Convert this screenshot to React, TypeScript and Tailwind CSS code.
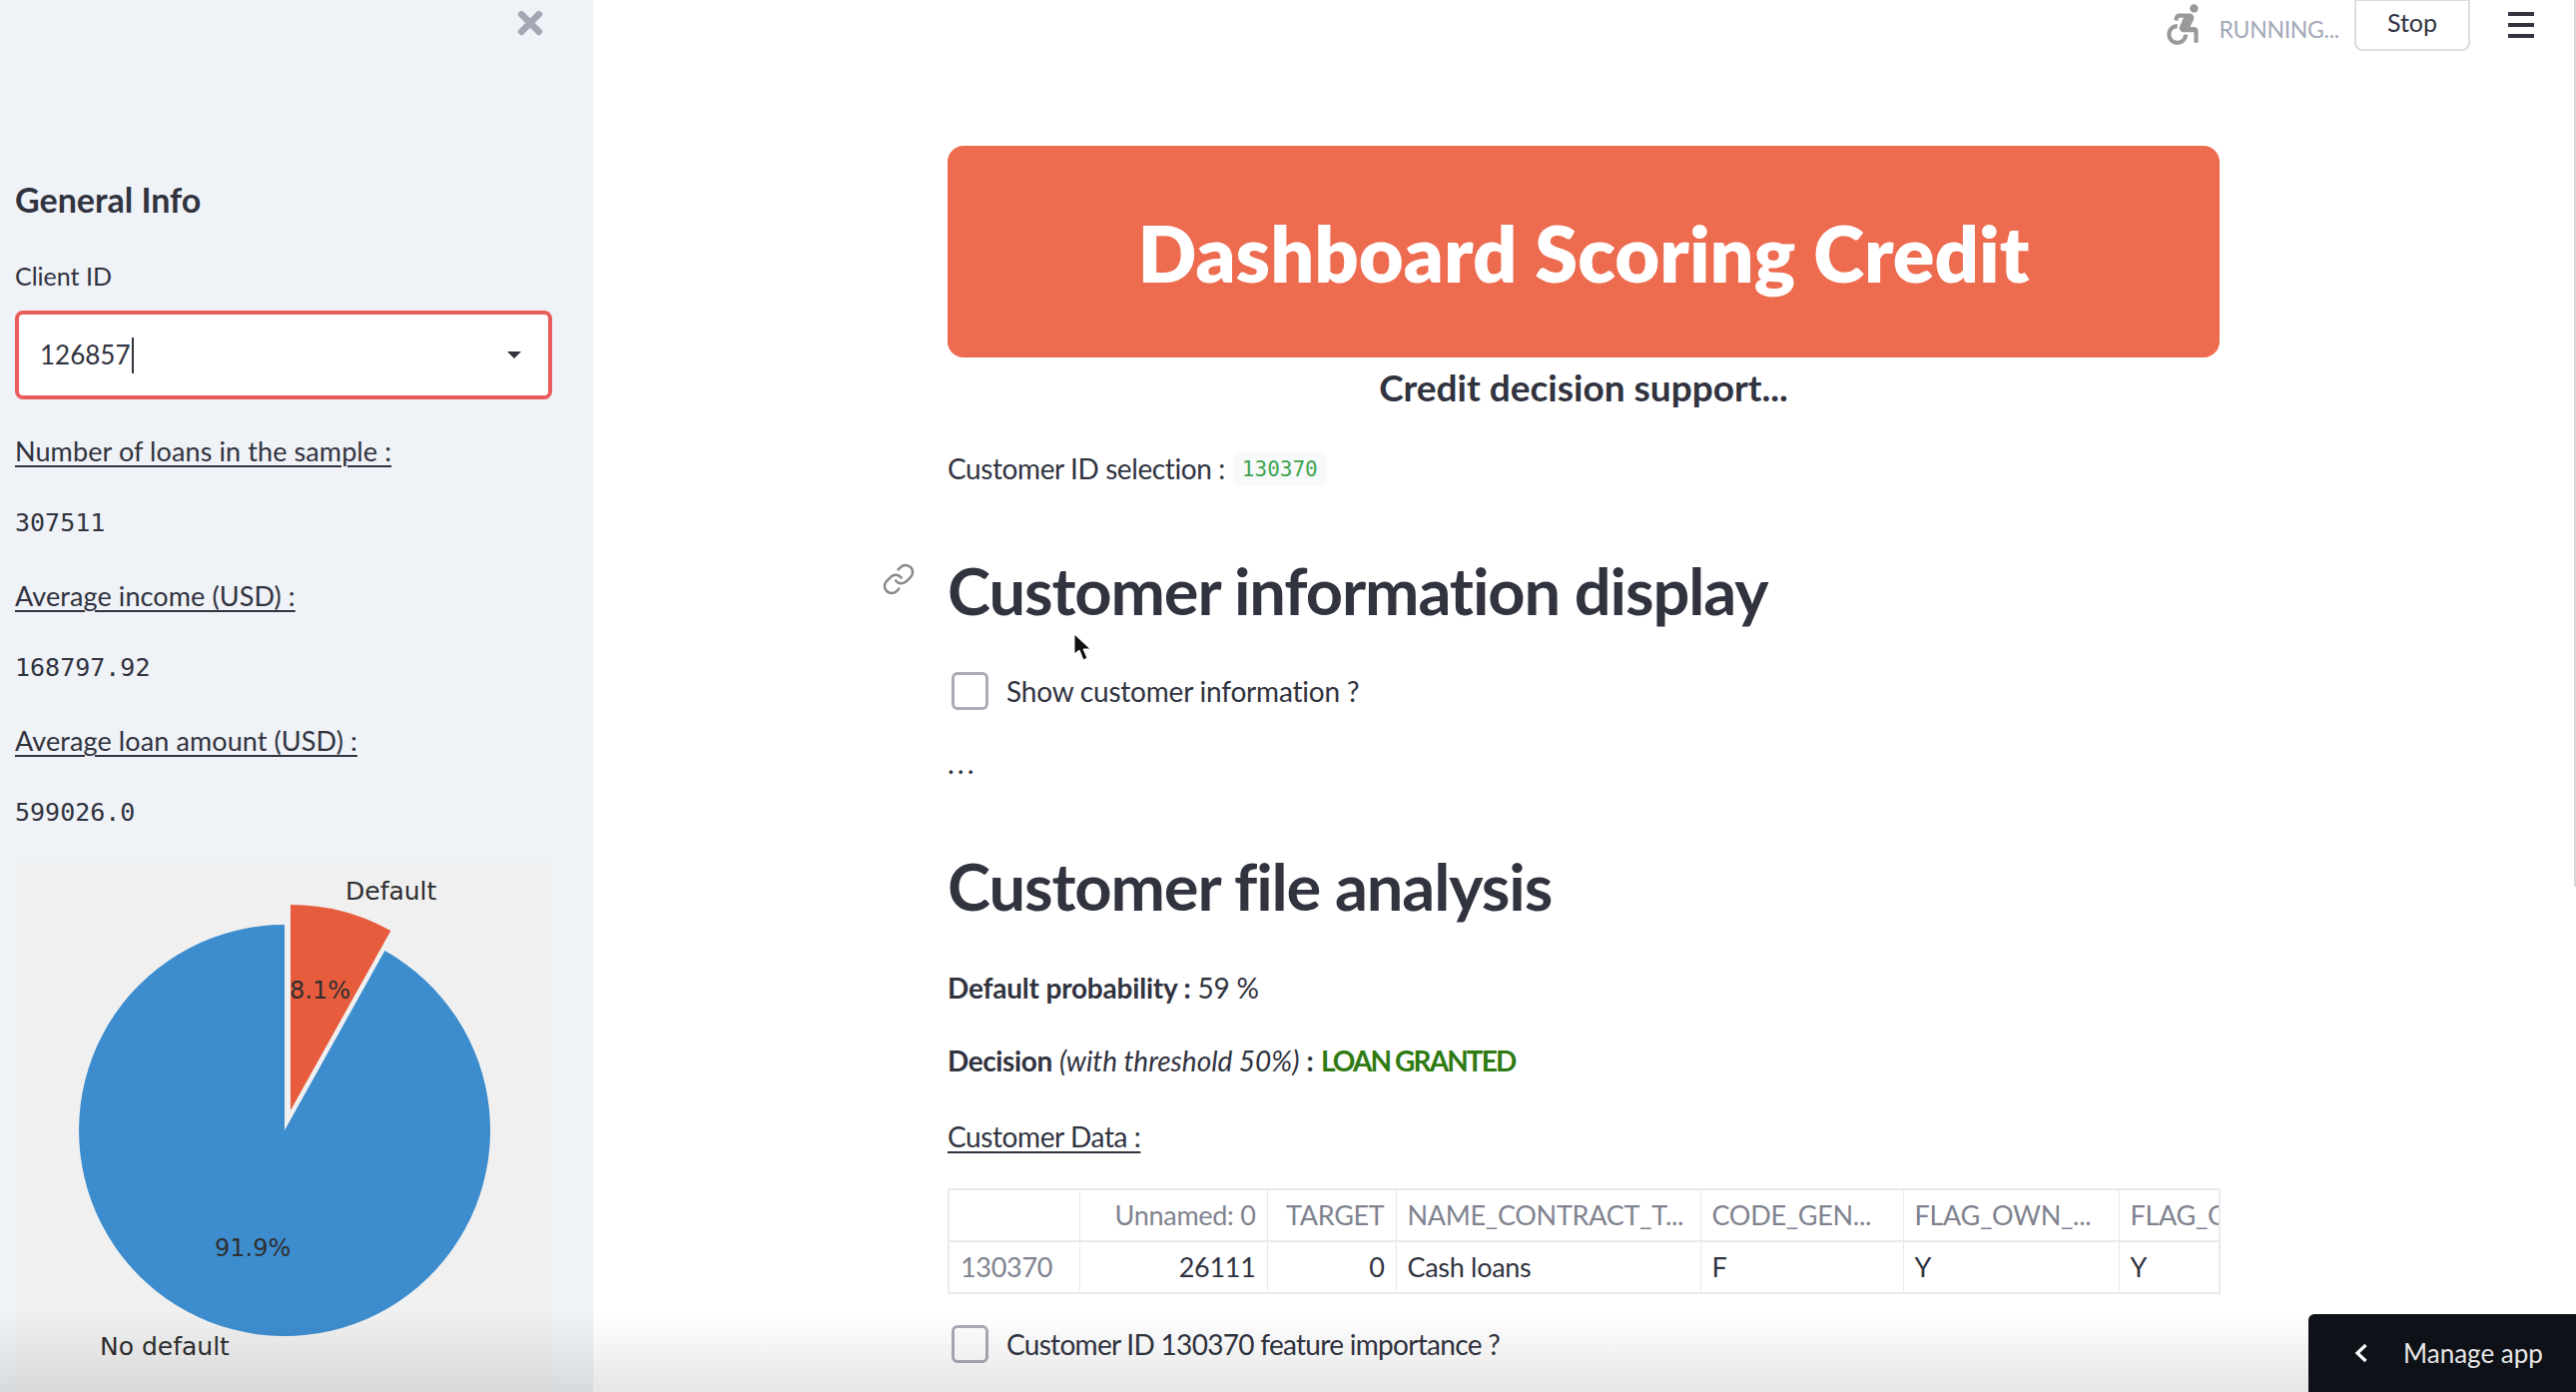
import React from 'react';
import { Link } from 'lucide-react';
import { FaTimes } from 'react-icons/fa';
import { MdAccessibleForward } from 'react-icons/md';

const sans = 'font-["Lato","Noto_Sans",sans-serif]';
const mono = 'font-["DejaVu_Sans_Mono","Liberation_Mono",monospace]';
const body = 'text-[28px]';
const heading = 'text-[65px] leading-[80px] font-bold tracking-[-1.1px]';

function PieChart() {
  return (
    <svg viewBox="0 0 538 531" className="block w-[538px] h-[531px]">
      <rect width="538" height="531" fill="#f0f0f0" />
      <path d="M270 269 L270 63 A206 206 0 1 0 370.4 89.1 Z" fill="#3d8dce" />
      <path d="M276 249 L276 43 A206 206 0 0 1 376.4 69.1 Z" fill="#e85c3e" />
      <g fontFamily="DejaVu Sans, sans-serif" fontSize="25" fill="#2e2e2e">
        <text x="331" y="38">Default</text>
        <text x="85" y="494">No default</text>
        <text x="275" y="137" fontSize="24">8.1%</text>
        <text x="200" y="395" fontSize="24">91.9%</text>
      </g>
    </svg>
  );
}

function Checkbox({ label, spacing }: { label: string; spacing: string }) {
  return (
    <div className="flex items-center h-[40px] pl-[4px]">
      <div className="w-[37px] h-[38px] rounded-[6px] border-[3px] border-[#a9acb4] bg-white" />
      <span className={`ml-[18px] ${body} ${spacing} leading-[40px]`}>{label}</span>
    </div>
  );
}

function SidebarStat({ label, value, top }: { label: string; value: string; top: string }) {
  return (
    <>
      <p className={`${top} text-[27px] leading-[36px] tracking-[0.1px] underline underline-offset-[4px] decoration-[2px]`}>{label}</p>
      <p className={`mt-[39px] ${mono} text-[25px] leading-[30px]`}>{value}</p>
    </>
  );
}

const columns = ['', 'Unnamed: 0', 'TARGET', 'NAME_CONTRACT_T...', 'CODE_GEN...', 'FLAG_OWN_...', 'FLAG_OWN_REALTY'];
const row = ['130370', '26111', '0', 'Cash loans', 'F', 'Y', 'Y'];

function DataTable() {
  return (
    <table className="mt-[34px] w-[1273px] h-[104px] table-fixed border-collapse border-2 border-[#e8eaee] text-[27px] tracking-[-0.3px]">
      <colgroup>
        <col className="w-[131px]" />
        <col className="w-[188px]" />
        <col className="w-[129px]" />
        <col className="w-[305px]" />
        <col className="w-[203px]" />
        <col className="w-[216px]" />
        <col className="w-[101px]" />
      </colgroup>
      <thead>
        <tr className="h-[52px]">
          {columns.map((c, i) => (
            <th
              key={i}
              className={`border border-[#e8eaee] border-b-2 px-[11px] font-normal text-[#80838f] whitespace-nowrap overflow-hidden ${
                i === 1 || i === 2 ? 'text-right' : 'text-left'
              }`}
            >
              {c}
            </th>
          ))}
        </tr>
      </thead>
      <tbody>
        <tr className="h-[52px]">
          {row.map((c, i) => (
            <td
              key={i}
              className={`border border-[#e8eaee] px-[11px] whitespace-nowrap overflow-hidden ${
                i === 0 ? 'text-[#80838f]' : ''
              } ${i === 1 || i === 2 ? 'text-right' : ''}`}
            >
              {c}
            </td>
          ))}
        </tr>
      </tbody>
    </table>
  );
}

export default function App() {
  return (
    <div className={`relative flex w-[2580px] h-[1394px] overflow-hidden bg-white text-[#31333f] ${sans}`}>
      {/* sidebar */}
      <aside className="w-[594px] h-full shrink-0 bg-[#eff2f6] pl-[15px] pr-[41px] overflow-hidden">
        <div className="flex justify-end items-start pt-[5px] pr-[5px] h-[36px]">
          <FaTimes className="w-[34px] h-[36px] text-[#a3a8b4]" />
        </div>
        <h2 className="mt-[142px] text-[34px] leading-[44px] font-bold">General Info</h2>
        <p className="mt-[38px] text-[25px] leading-[32px]">Client ID</p>
        <div className="mt-[19px] h-[89px] flex items-center justify-between rounded-[8px] border-[4px] border-[#e95d5d] bg-white pl-[21px] pr-[27px]">
          <div className="flex items-center">
            <span className="text-[26px]">126857</span>
            <span className="ml-[2px] w-[2px] h-[36px] bg-[#31333f]" />
          </div>
          <div className="w-0 h-0 border-x-[7px] border-x-transparent border-t-[7px] border-t-[#31333f]" />
        </div>
        <SidebarStat top="mt-[34px]" label="Number of loans in the sample :" value="307511" />
        <SidebarStat top="mt-[40px]" label="Average income (USD) :" value="168797.92" />
        <SidebarStat top="mt-[40px]" label="Average loan amount (USD) :" value="599026.0" />
        <div className="mt-[34px]">
          <PieChart />
        </div>
      </aside>

      {/* main */}
      <main className="flex-1 flex flex-col min-w-0">
        <header className="flex justify-end items-start h-[51px] pr-[42px]">
          <MdAccessibleForward className="-mt-[1px] w-[50px] h-[50px] text-[#999999]" />
          <span className="ml-[11px] mt-[11px] text-[23px] tracking-[-0.3px] leading-[36px] text-[#a3a8b8]">RUNNING...</span>
          <button className="ml-[15px] w-[116px] h-[52px] -mt-px rounded-b-[8px] border-2 border-[#dcdde0] text-[25px] pb-[4px]">
            Stop
          </button>
          <div className="ml-[38px] mt-[12px] w-[26px] flex flex-col gap-[7px]">
            <span className="h-[4px] bg-[#31333f]" />
            <span className="h-[4px] bg-[#31333f]" />
            <span className="h-[4px] bg-[#31333f]" />
          </div>
        </header>

        <div className="ml-[355px] w-[1274px]">
          <div className="mt-[95px] h-[212px] rounded-[16px] bg-[#ed6c50] flex items-center justify-center pt-[4px]">
            <h1 className="text-[77.5px] font-extrabold text-white leading-none">Dashboard Scoring Credit</h1>
          </div>
          <p className="mt-[10px] text-center text-[37px] leading-[40px] font-bold">Credit decision support...</p>
          <div className={`mt-[44px] flex items-center h-[34px] ${body} tracking-[-0.4px]`}>
            Customer ID selection :
            <code className={`ml-[8px] px-[9px] h-[34px] rounded-[6px] bg-[#f8f9fb] text-[#3fa650] text-[21px] tracking-normal leading-[36px] ${mono}`}>
              130370
            </code>
          </div>
          <div className="relative">
            <Link className="absolute left-[-66px] top-[12px] w-[34px] h-[34px] text-[#8a8a8a]" strokeWidth={1.8} />
            <h2 className={`mt-[65px] ${heading}`}>Customer information display</h2>
          </div>
          <div className="mt-[41px]">
            <Checkbox label="Show customer information ?" spacing="tracking-[-0.2px]" />
          </div>
          <p className="mt-[37px] text-[29px] leading-[30px] tracking-[3px]">...</p>
          <h2 className={`mt-[68px] ${heading}`}>Customer file analysis</h2>
          <p className={`mt-[44px] ${body} leading-[36px] tracking-[-0.2px]`}>
            <strong>Default probability :</strong> 59 %
          </p>
          <p className={`mt-[37px] ${body} leading-[36px]`}>
            <strong className="tracking-[-0.4px]">Decision</strong> <em>(with threshold 50%)</em> <strong>:</strong>{' '}
            <strong className="text-[#2f7a12] tracking-[-1.9px]">LOAN GRANTED</strong>
          </p>
          <p className={`mt-[40px] ${body} tracking-[-0.4px] leading-[36px] underline underline-offset-[4px] decoration-[2px]`}>Customer Data :</p>
          <DataTable />
          <div className="mt-[30px]">
            <Checkbox label="Customer ID 130370 feature importance ?" spacing="tracking-[-0.7px]" />
          </div>
        </div>
      </main>

      {/* mouse pointer caught in the recording */}
      <svg viewBox="0 0 18 28" className="absolute left-[1075px] top-[634px] w-[18px] h-[28px]">
        <path d="M1 1 L1 21 L6 17 L10 27 L14 25 L10 16 L17 16 Z" fill="#111" stroke="#fff" strokeWidth="1" />
      </svg>

      {/* page scrollbar */}
      <div className="absolute right-0 top-0 w-[2px] h-[888px] bg-[#d8d8d8]" />

      {/* bottom shadow */}
      <div className="absolute inset-x-0 bottom-0 h-[80px] bg-gradient-to-b from-transparent to-black/10 pointer-events-none" />

      {/* manage app */}
      <div className="absolute right-0 bottom-0 w-[268px] h-[78px] rounded-tl-[6px] bg-[#0e1117] flex items-center pl-[46px] text-[#e6e6e6]">
        <svg viewBox="0 0 14 20" className="w-[14px] h-[20px]">
          <path d="M11.5 2 L3 10 L11.5 18" fill="none" stroke="#fff" strokeWidth="3.2" />
        </svg>
        <span className="ml-[35px] text-[26px]">Manage app</span>
      </div>
    </div>
  );
}
